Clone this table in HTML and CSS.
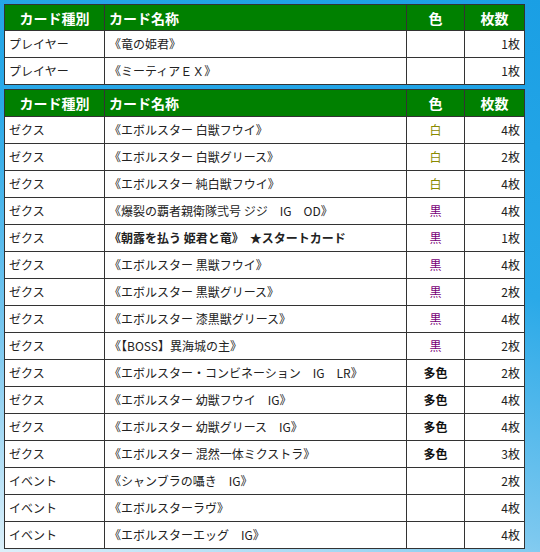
FILE: index.html
```html
<!DOCTYPE html>
<html lang="ja">
<head>
<meta charset="utf-8">
<link rel="stylesheet" href="styles.css">
</head>
<body>
<div class="page">
<table class="deck">
<colgroup><col class="c1"><col class="c2"><col class="c3"><col class="c4"></colgroup>
<thead><tr class="first-head"><th class="center">カード種別</th><th class="left">カード名称</th><th class="center">色</th><th class="center">枚数</th></tr></thead>
<tbody>
<tr><td>プレイヤー</td><td class="name">《竜の姫君》</td><td></td><td class="num">1枚</td></tr>
<tr><td>プレイヤー</td><td class="name">《ミーティアＥＸ》</td><td></td><td class="num">1枚</td></tr>
</tbody>
</table>
<table class="deck second">
<colgroup><col class="c1"><col class="c2"><col class="c3"><col class="c4"></colgroup>
<thead><tr><th class="center">カード種別</th><th class="left">カード名称</th><th class="center">色</th><th class="center">枚数</th></tr></thead>
<tbody>
<tr><td>ゼクス</td><td class="name">《エボルスター 白獣フウイ》</td><td class="clr white">白</td><td class="num">4枚</td></tr>
<tr><td>ゼクス</td><td class="name">《エボルスター 白獣グリース》</td><td class="clr white">白</td><td class="num">2枚</td></tr>
<tr><td>ゼクス</td><td class="name">《エボルスター 純白獣フウイ》</td><td class="clr white">白</td><td class="num">4枚</td></tr>
<tr><td>ゼクス</td><td class="name">《爆裂の覇者親衛隊弐号 ジジ　IG　OD》</td><td class="clr black">黒</td><td class="num">4枚</td></tr>
<tr><td>ゼクス</td><td class="name bold">《朝露を払う 姫君と竜》　★スタートカード</td><td class="clr black">黒</td><td class="num">1枚</td></tr>
<tr><td>ゼクス</td><td class="name">《エボルスター 黒獣フウイ》</td><td class="clr black">黒</td><td class="num">4枚</td></tr>
<tr><td>ゼクス</td><td class="name">《エボルスター 黒獣グリース》</td><td class="clr black">黒</td><td class="num">2枚</td></tr>
<tr><td>ゼクス</td><td class="name">《エボルスター 漆黒獣グリース》</td><td class="clr black">黒</td><td class="num">4枚</td></tr>
<tr><td>ゼクス</td><td class="name">《【BOSS】異海城の主》</td><td class="clr black">黒</td><td class="num">2枚</td></tr>
<tr><td>ゼクス</td><td class="name">《エボルスター・コンビネーション　IG　LR》</td><td class="clr multi">多色</td><td class="num">2枚</td></tr>
<tr><td>ゼクス</td><td class="name">《エボルスター 幼獣フウイ　IG》</td><td class="clr multi">多色</td><td class="num">4枚</td></tr>
<tr><td>ゼクス</td><td class="name">《エボルスター 幼獣グリース　IG》</td><td class="clr multi">多色</td><td class="num">4枚</td></tr>
<tr><td>ゼクス</td><td class="name">《エボルスター 混然一体ミクストラ》</td><td class="clr multi">多色</td><td class="num">3枚</td></tr>
<tr><td>イベント</td><td class="name">《シャンブラの囁き　IG》</td><td></td><td class="num">2枚</td></tr>
<tr><td>イベント</td><td class="name">《エボルスターラヴ》</td><td></td><td class="num">4枚</td></tr>
<tr><td>イベント</td><td class="name">《エボルスターエッグ　IG》</td><td></td><td class="num">4枚</td></tr>
</tbody>
</table>
</div>
</body>
</html>
```

FILE: styles.css
```css
html, body {
  margin: 0;
  padding: 0;
  height: 100%;
}
body {
  background: linear-gradient(200deg, #1a9fe4 0%, #2aa9e8 40%, #7cc8ef 72%, #dcf0fa 100%);
  font-family: "Noto Sans CJK JP", "Liberation Sans", sans-serif;
  font-size: 12px;
  color: #222;
}
.page {
  padding: 4px 0 0 4px;
}
.deck {
  border-collapse: collapse;
  table-layout: fixed;
  width: 520px;
  background: #fff;
}
.deck.second {
  margin-top: 4px;
}
.c1 { width: 100px; }
.c2 { width: 302px; }
.c3 { width: 58px; }
.c4 { width: 60px; }
.deck th, .deck td {
  border: 1px solid #333;
  height: 27px;
  padding: 0 4px;
  box-sizing: border-box;
  line-height: 16px;
  white-space: nowrap;
  overflow: hidden;
}
.deck .first-head th {
  height: 26px;
}
.deck th {
  background: #008000;
  color: #fff;
  font-weight: bold;
  font-size: 14px;
}
.center { text-align: center; }
.left { text-align: left; }
.name { padding-left: 4px; }
.bold { font-weight: bold; }
.num { text-align: right; }
.clr { text-align: center; }
.white { color: #8a8a00; }
.black { color: #780078; }
.multi { font-weight: bold; color: #111; }
```
